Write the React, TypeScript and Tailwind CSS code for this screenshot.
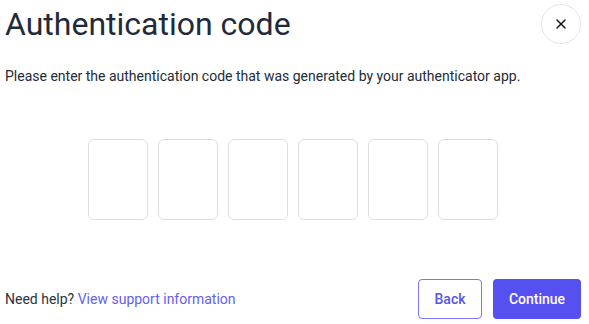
import { X } from 'lucide-react';

const digits = [0, 1, 2, 3, 4, 5];

export default function App() {
  return (
    <div
      className="flex h-[324px] w-[589px] flex-col bg-white pl-[5px] pr-[8px] pb-[5px] pt-[4px] text-[#1f2937]"
      style={{ fontFamily: 'Roboto, "Noto Sans", sans-serif' }}
    >
      <div className="flex items-start justify-between">
        <h1 className="text-[32px] leading-[40px] font-normal text-[#1f2a3a]">
          Authentication code
        </h1>
        <button className="flex h-10 w-10 items-center justify-center rounded-full border border-[#e5e5e5] bg-white">
          <X size={16} strokeWidth={2} className="text-[#111]" />
        </button>
      </div>

      <p className="mt-[22px] text-[14px] leading-5 text-[#222b38]">
        Please enter the authentication code that was generated by your authenticator app.
      </p>

      <div className="mt-[53px] flex justify-center gap-[10px]">
        {digits.map((d) => (
          <input
            key={d}
            type="text"
            maxLength={1}
            className="h-[81px] w-[60px] rounded-[6px] border border-[#dedede] bg-white text-center text-2xl outline-none"
          />
        ))}
      </div>

      <div className="mt-auto flex items-center justify-between">
        <p className="text-[14px] text-[#2b3240]">
          Need help? <a className="text-[#6360f0]">View support information</a>
        </p>
        <div className="flex gap-[11px]">
          <button className="h-10 w-[64px] rounded-[4px] border border-[#7a75f4] text-[14px] font-medium text-[#5a53e8]">
            Back
          </button>
          <button className="h-10 w-[88px] rounded-[4px] bg-[#5750f1] text-[14px] font-medium text-white">
            Continue
          </button>
        </div>
      </div>
    </div>
  );
}
